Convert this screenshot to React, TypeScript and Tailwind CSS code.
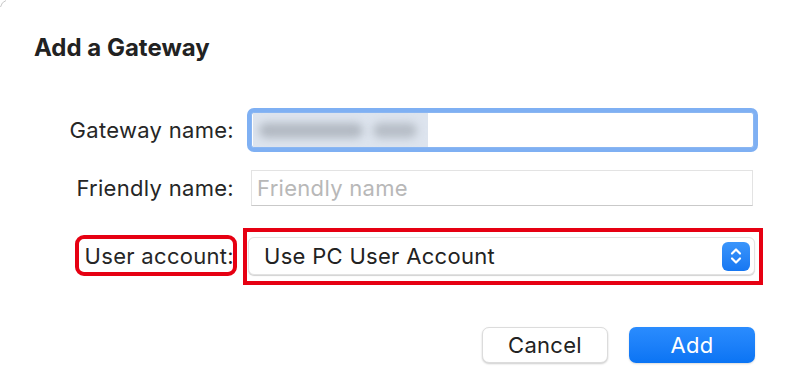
import React from "react";

function Stepper() {
  return (
    <div className="w-[28px] h-[29px] rounded-[6px] bg-gradient-to-b from-[#3a95fb] to-[#1677f2] flex items-center justify-center">
      <svg width="14" height="20" viewBox="0 0 14 20" fill="none">
        <path d="M3 7.5 L7 3.5 L11 7.5" stroke="white" strokeWidth="2.2" strokeLinecap="round" strokeLinejoin="round" />
        <path d="M3 12.5 L7 16.5 L11 12.5" stroke="white" strokeWidth="2.2" strokeLinecap="round" strokeLinejoin="round" />
      </svg>
    </div>
  );
}

export default function App() {
  return (
    <div
      className="relative w-[785px] h-[383px] bg-white overflow-hidden text-[#262626]"
      style={{ fontFamily: "Inter, 'Liberation Sans', sans-serif" }}
    >
      <svg className="absolute left-0 top-0" width="10" height="10" viewBox="0 0 10 10">
        <path d="M0.5 7 Q1.5 2 6 0.5" stroke="#c8c8c8" strokeWidth="1" fill="none" />
      </svg>

      <div className="pt-[32px] pl-[34px]">
        <h1 className="h-[32px] leading-[32px] text-[24px] font-bold text-[#222]">Add a Gateway</h1>
      </div>

      {/* Gateway name */}
      <div className="mt-[48px] flex items-center h-[36px]">
        <div className="w-[234px] text-right text-[22px] tracking-[0.3px] leading-[26px]">Gateway name:</div>
        <div className="ml-[17px] w-[503px] h-[36px] rounded-[3px] bg-white border border-[#8ab6f2] shadow-[0_0_0_4px_#7fb0f3] flex items-center pl-[1px]">
          <div className="relative h-[34px] w-[175px] bg-[#dde4ee] overflow-hidden">
            <div className="absolute left-[6px] top-[10px] h-[15px] w-[104px] rounded-full bg-[#b2b9c2] blur-[4px]" />
            <div className="absolute left-[120px] top-[10px] h-[15px] w-[44px] rounded-full bg-[#b6bdc6] blur-[4px]" />
          </div>
        </div>
      </div>

      {/* Friendly name */}
      <div className="mt-[22px] flex items-center h-[36px]">
        <div className="w-[234px] text-right text-[22px] tracking-[0.3px] leading-[26px]">Friendly name:</div>
        <div className="ml-[17px] w-[502px] h-[36px] bg-white border border-[#e3e3e3] border-b-[#c9c9c9] flex items-center pl-[5px]">
          <span className="text-[22px] tracking-[0.3px] leading-[26px] text-[#b8b8b8]">Friendly name</span>
        </div>
      </div>

      {/* User account */}
      <div className="mt-[31px] flex items-center h-[38px]">
        <div className="w-[234px] flex justify-end">
          <div className="relative text-[22px] tracking-[0.3px] leading-[26px]">
            User account:
            <div className="absolute left-[-10px] right-[-3px] top-[-8px] bottom-[-7px] rounded-[9px] border-[4px] border-[#e60012]" />
          </div>
        </div>
        <div className="relative ml-[14px] w-[507px] h-[38px] rounded-[6px] bg-white border border-[#e2e2e2] shadow-[0_1px_1px_rgba(0,0,0,0.18)] flex items-center pl-[15px] pr-[4px]">
          <span className="flex-1 text-[22px] tracking-[0.3px] leading-[26px] text-[#222]">Use PC User Account</span>
          <Stepper />
          <div className="absolute left-[-6px] right-[-9px] top-[-10px] bottom-[-11px] border-[4px] border-[#e60012]" />
        </div>
      </div>

      {/* Buttons */}
      <div className="mt-[52px] flex justify-end pr-[30px] gap-[21px]">
        <button className="w-[126px] h-[36px] rounded-[7px] bg-white border border-[#dcdcdc] shadow-[0_1px_2px_rgba(0,0,0,0.2)] text-[22px] tracking-[0.3px] leading-[26px] text-[#222]">
          Cancel
        </button>
        <button className="w-[126px] h-[36px] rounded-[7px] bg-gradient-to-b from-[#2a8cfe] to-[#0a74f4] shadow-[0_1px_2px_rgba(0,0,0,0.15)] text-[22px] tracking-[0.3px] leading-[26px] text-white">
          Add
        </button>
      </div>
    </div>
  );
}
